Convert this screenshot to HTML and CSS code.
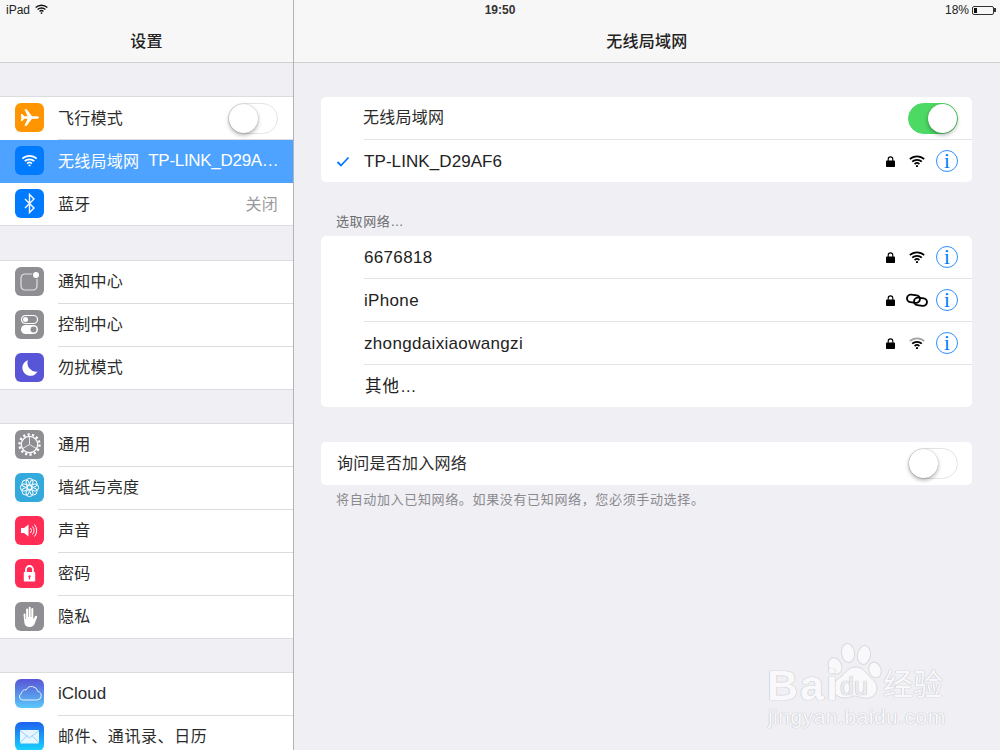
FILE: index.html
```html
<!DOCTYPE html>
<html lang="zh">
<head>
<meta charset="utf-8">
<title>无线局域网</title>
<link rel="stylesheet" href="styles.css">
</head>
<body>
<svg class="defs" width="0" height="0" aria-hidden="true">
  <defs>
    <symbol id="wifi" viewBox="0 0 16 12">
      <path d="M.8 4.200a10.400 10.400 0 0 1 14.400 0" class="wa"/>
      <path d="M3.200 6.700a7 7 0 0 1 9.600 0" class="wb"/>
      <path d="M5.600 9.100a3.500 3.500 0 0 1 4.800 0" class="wc"/>
      <circle cx="8" cy="11" r="1.100" class="wd"/>
    </symbol>
    <symbol id="lock" viewBox="0 0 9 11">
      <path d="M2.200 5V3.200a2.300 2.300 0 0 1 4.600 0V5" fill="none" stroke="#000" stroke-width="1.100"/>
      <rect x="0" y="4.600" width="9" height="6.400" rx=".8" fill="#000"/>
    </symbol>
  </defs>
</svg>

<div class="status">
  <div class="status-left">iPad
    <svg class="wifi-status" width="13" height="10"><use href="#wifi"/></svg>
  </div>
  <div class="status-time">19:50</div>
  <div class="status-right">18%
    <span class="battery"><span class="battery-fill"></span></span>
  </div>
</div>

<div class="app">
  <aside class="side">
    <header class="bar">设置</header>

    <section class="group first">
      <div class="row">
        <span class="ico orange"><svg viewBox="0 0 29 29"><path d="M6 14.500c0-.8.7-1.300 1.600-1.300h5l-3.200-7h2.300l5.300 7h4.300c1.100 0 2.700.5 2.700 1.300s-1.600 1.300-2.700 1.300H17l-5.300 7H9.400l3.200-7h-5c-.9 0-1.600-.5-1.600-1.300zM6 11h1.300l1.900 2.200H6zM6 18h1.300l1.900-2.200H6z" fill="#fff"/></svg></span>
        <div class="body"><span class="label">飞行模式</span><span class="switch"><span class="knob"></span></span></div>
      </div>
      <div class="row selected">
        <span class="ico blue"><svg viewBox="0 0 29 29"><use href="#wifi" x="6.500" y="8.500" width="16" height="12"/></svg></span>
        <div class="body"><span class="label">无线局域网</span><span class="net-value">TP-LINK_D29A…</span></div>
      </div>
      <div class="row">
        <span class="ico blue"><svg viewBox="0 0 29 29"><path d="M10 10l9 9-4.500 4.500v-18L19 10l-9 9" fill="none" stroke="#fff" stroke-width="1.400"/></svg></span>
        <div class="body"><span class="label">蓝牙</span><span class="value">关闭</span></div>
      </div>
    </section>

    <section class="group">
      <div class="row">
        <span class="ico gray"><svg viewBox="0 0 29 29"><rect x="6" y="7" width="16" height="16" rx="4" fill="none" stroke="#fff" stroke-opacity=".75" stroke-width="1.200"/><circle cx="21" cy="8" r="4" fill="#8e8e93"/><circle cx="21" cy="8" r="3" fill="#fff"/></svg></span>
        <div class="body"><span class="label">通知中心</span></div>
      </div>
      <div class="row">
        <span class="ico gray"><svg viewBox="0 0 29 29"><rect x="6.500" y="5.500" width="16" height="8" rx="4" fill="none" stroke="#fff" stroke-width="1.200"/><circle cx="10.500" cy="9.500" r="2.500" fill="#fff"/><rect x="6" y="15" width="17" height="9" rx="4.500" fill="#fff"/><circle cx="18.500" cy="19.500" r="3" fill="#8e8e93"/></svg></span>
        <div class="body"><span class="label">控制中心</span></div>
      </div>
      <div class="row">
        <span class="ico purple"><svg viewBox="0 0 29 29"><path d="M13 7.200a8 8 0 1 0 9.500 11.300A8.500 8.500 0 0 1 13 7.200z" fill="#fff"/></svg></span>
        <div class="body"><span class="label">勿扰模式</span></div>
      </div>
    </section>

    <section class="group">
      <div class="row">
        <span class="ico gray"><svg viewBox="0 0 29 29"><circle cx="14.500" cy="14.500" r="10" fill="none" stroke="#fff" stroke-width="2.400" stroke-dasharray="2.240 2.240"/><circle cx="14.500" cy="14.500" r="8.200" fill="none" stroke="#fff" stroke-width="1.200"/><path d="M14.500 14.500V7M14.500 14.500l6.500 3.800M14.500 14.500L8 18.300" stroke="#fff" stroke-width=".8"/></svg></span>
        <div class="body"><span class="label">通用</span></div>
      </div>
      <div class="row">
        <span class="ico sky"><svg viewBox="0 0 29 29"><g fill="none" stroke="#fff" stroke-width="1"><circle cx="14.500" cy="14.500" r="2.400"/><circle cx="14.500" cy="9" r="3.600"/><circle cx="14.500" cy="20" r="3.600"/><circle cx="9" cy="14.500" r="3.600"/><circle cx="20" cy="14.500" r="3.600"/><circle cx="10.600" cy="10.600" r="3.600"/><circle cx="18.400" cy="10.600" r="3.600"/><circle cx="10.600" cy="18.400" r="3.600"/><circle cx="18.400" cy="18.400" r="3.600"/></g></svg></span>
        <div class="body"><span class="label">墙纸与亮度</span></div>
      </div>
      <div class="row">
        <span class="ico pink"><svg viewBox="0 0 29 29"><path d="M6 12h3l4.500-3.500v12L9 17H6z" fill="#fff"/><path d="M15.500 12a4 4 0 0 1 0 5M17.500 10.500a6.500 6.500 0 0 1 0 8M19.500 8.500a9.500 9.500 0 0 1 0 12" fill="none" stroke="#fff" stroke-width="1"/></svg></span>
        <div class="body"><span class="label">声音</span></div>
      </div>
      <div class="row">
        <span class="ico pink"><svg viewBox="0 0 29 29"><path d="M11 13.500V10.500a3.500 3.500 0 0 1 7 0v3" fill="none" stroke="#fff" stroke-width="1.800"/><path fill-rule="evenodd" d="M9.500 13h10a.7.7 0 0 1 .7.700v8a.7.7 0 0 1-.7.700h-10a.7.7 0 0 1-.7-.700v-8a.7.7 0 0 1 .7-.700zm5 3.200a1.300 1.300 0 0 0-.6 2.400V20.500h1.200v-1.900a1.300 1.300 0 0 0-.6-2.400z" fill="#fff"/></svg></span>
        <div class="body"><span class="label">密码</span></div>
      </div>
      <div class="row">
        <span class="ico gray"><svg viewBox="0 0 29 29"><path d="M8.500 12.500c0-1.500 2-1.500 2 0V17h.6V7.500c0-1.500 2-1.500 2 0V15h.6V5.800c0-1.500 2-1.500 2 0V15h.6V7c0-1.500 2-1.500 2 0v10.500l1.600-3c.9-1.500 2.800-.8 2.200.8l-2.600 6.700c-.9 2-2.500 3-4.700 3-3.500 0-5.300-1.800-5.500-5z" fill="#fff"/></svg></span>
        <div class="body"><span class="label">隐私</span></div>
      </div>
    </section>

    <section class="group">
      <div class="row">
        <span class="ico cloud"><svg viewBox="0 0 29 29"><path d="M7.500 21h14.500a4.300 4.300 0 0 0 .8-8.500 6.200 6.200 0 0 0-11.600-1.600 3.600 3.600 0 0 0-4.600 3.400A3.500 3.500 0 0 0 7.500 21z" fill="none" stroke="#fff" stroke-opacity=".85" stroke-width="1"/></svg></span>
        <div class="body"><span class="latin">iCloud</span></div>
      </div>
      <div class="row">
        <span class="ico mail"><svg viewBox="0 0 29 29"><rect x="5" y="8" width="19" height="13.500" rx="1" fill="#fff" fill-opacity=".9"/><path d="M5 8.500l9.500 7.500 9.500-7.500M5 21l7-7.500M24 21l-7-7.500" fill="none" stroke="#7cc8f8" stroke-width=".8"/></svg></span>
        <div class="body"><span class="label wide">邮件、通讯录、日历</span></div>
      </div>
    </section>
  </aside>

  <main class="main">
    <header class="bar">无线局域网</header>
    <div class="content">
      <section class="card">
        <div class="net">
          <span class="tick"></span>
          <div class="net-body shift"><span class="label">无线局域网</span><span class="switch on"><span class="knob"></span></span></div>
        </div>
        <div class="net">
          <span class="tick"><svg width="14" height="11" viewBox="0 0 14 11"><path d="M1.500 6l3.500 3.500L12.500 1.500" fill="none" stroke="#007aff" stroke-width="1.800"/></svg></span>
          <div class="net-body"><span class="net-name tight">TP-LINK_D29AF6</span>
            <svg class="lock" width="9" height="11"><use href="#lock"/></svg>
            <svg class="wf" width="16" height="12"><use href="#wifi"/></svg>
            <span class="info">i</span></div>
        </div>
      </section>

      <p class="caption">选取网络…</p>
      <section class="card">
        <div class="net">
          <span class="tick"></span>
          <div class="net-body"><span class="net-name">6676818</span>
            <svg class="lock" width="9" height="11"><use href="#lock"/></svg>
            <svg class="wf" width="16" height="12"><use href="#wifi"/></svg>
            <span class="info">i</span></div>
        </div>
        <div class="net">
          <span class="tick"></span>
          <div class="net-body"><span class="net-name">iPhone</span>
            <svg class="lock" width="9" height="11"><use href="#lock"/></svg>
            <svg class="wf link" width="22" height="14" viewBox="0 0 22 14"><rect x="1" y="2" width="13" height="7.500" rx="3.750" fill="none" stroke="#000" stroke-width="1.800" transform="rotate(8 7.500 5.700)"/><rect x="8" y="5" width="13" height="7.500" rx="3.750" fill="none" stroke="#000" stroke-width="1.800" transform="rotate(8 14.500 8.700)"/></svg>
            <span class="info">i</span></div>
        </div>
        <div class="net">
          <span class="tick"></span>
          <div class="net-body"><span class="net-name">zhongdaixiaowangzi</span>
            <svg class="lock" width="9" height="11"><use href="#lock"/></svg>
            <svg class="wf weak" width="16" height="12"><use href="#wifi"/></svg>
            <span class="info">i</span></div>
        </div>
        <div class="net">
          <span class="tick"></span>
          <div class="net-body"><span class="net-name cjk">其他…</span></div>
        </div>
      </section>

      <section class="card ask">
        <div class="net">
          <div class="net-body"><span class="label">询问是否加入网络</span><span class="switch"><span class="knob"></span></span></div>
        </div>
      </section>
      <p class="note">将自动加入已知网络。如果没有已知网络，您必须手动选择。</p>
    </div>
  </main>
</div>

<div class="watermark">
  <svg class="paw" width="60" height="62" viewBox="0 0 60 62">
    <g fill="#f9f9fc" stroke="#d9d9de" stroke-width="1">
      <ellipse cx="8" cy="24" rx="6.500" ry="8.500" transform="rotate(-25 8 24)"/>
      <ellipse cx="21" cy="11" rx="6.500" ry="9.500" transform="rotate(-8 21 11)"/>
      <ellipse cx="37" cy="13" rx="6.500" ry="9.500" transform="rotate(10 37 13)"/>
      <ellipse cx="48" cy="28" rx="6" ry="8" transform="rotate(-20 48 28)"/>
      <path d="M29 25c6 0 9 5 13 9 4 3 8 7 8 12 0 8-7 11-13 10-4 0-6-2-9-2s-5 2-10 2C11 56 6 52 6 46c0-6 5-9 9-12 4-4 7-9 14-9z"/>
    </g>
  </svg>
  <span class="wm-bai">Bai</span>
  <span class="wm-du">du</span>
  <span class="wm-cn">经验</span>
  <span class="wm-url">jingyan.baidu.com</span>
</div>
</body>
</html>
```
FILE: styles.css
```css
* { box-sizing: border-box; }
html, body { margin: 0; height: 750px; overflow: hidden; }
body {
  background: #efeff4;
  color: #222;
  font-family: "Liberation Sans", "Noto Sans CJK SC", sans-serif;
  font-size: 16px;
  position: relative;
}
.defs { position: absolute; }

.wa, .wb, .wc { fill: none; stroke: currentColor; stroke-width: 1.700; }
.wa { stroke: var(--outer-arc, currentColor); }
.wd { fill: currentColor; }

.status {
  position: absolute;
  top: 0; left: 0; right: 0;
  height: 20px;
  display: flex;
  align-items: center;
  justify-content: space-between;
  padding: 0 6px;
  font-size: 12px;
  color: #222;
}
.status-left { display: flex; align-items: center; gap: 5px; width: 200px; }
.wifi-status { color: #111; margin-top: -2px; }
.status-time { font-weight: 700; font-size: 12px; color: #333; }
.status-right { display: flex; align-items: center; justify-content: flex-end; gap: 3px; width: 200px; }
.battery {
  width: 22px; height: 9px;
  border: 1px solid #333;
  border-radius: 2px;
  padding: 1px;
  position: relative;
  display: block;
}
.battery::after {
  content: "";
  position: absolute;
  right: -3px; top: 1.500px;
  width: 2px; height: 4px;
  background: #333;
}
.battery-fill { display: block; width: 3px; height: 100%; background: #111; }

.app { display: flex; height: 750px; }
.side {
  width: 294px;
  flex: none;
  border-right: 1px solid #b4b4b8;
  overflow: hidden;
}
.main { flex: 1; min-width: 0; }

.bar {
  height: 63px;
  padding-top: 18px;
  background: #f7f7f7;
  border-bottom: 1px solid #cfcfd2;
  display: flex;
  align-items: center;
  justify-content: center;
  font-size: 16px;
  font-weight: 500;
  letter-spacing: .25px;
  color: #222;
}

.group {
  background: #fff;
  border-top: 1px solid #dcdce0;
  margin-top: 33px;
}
.group.first { margin-bottom: 34px; }
.row { display: flex; height: 43px; padding-left: 15px; align-items: stretch; }
.ico {
  width: 29px; height: 29px;
  border-radius: 6px;
  flex: none;
  margin-top: 6px;
  margin-right: 14px;
  overflow: hidden;
  display: block;
}
.ico svg { display: block; width: 29px; height: 29px; }
.orange { background: #ff9500; }
.blue { background: #007aff; color: #fff; }
.gray { background: #8e8e93; }
.purple { background: #5856d6; }
.sky { background: #34aadc; }
.pink { background: #ff2d55; }
.cloud { background: linear-gradient(#5856d6, #5ac8fa); }
.mail { background: linear-gradient(#1d62f0, #19d5fd); }

.body {
  flex: 1;
  min-width: 0;
  display: flex;
  align-items: center;
  justify-content: space-between;
  padding-right: 15px;
  border-bottom: 1px solid #dcdce0;
}
.row:last-child { margin-left: -15px; padding-left: 30px; }
.row:last-child .body { margin-left: -58px; padding-left: 58px; }
.label { letter-spacing: .25px; color: #2b2b2b; margin-bottom: 3px; white-space: nowrap; }
.group:not(.first) .label { margin-bottom: 5px; }
.label.wide { letter-spacing: .6px; }
.latin { font-size: 17px; color: #2b2b2b; }
.value { color: #9a9a9e; letter-spacing: .2px; margin-bottom: 3px; }

.selected { background: #4da3ff; }
.selected .body { border-bottom-color: #4da3ff; justify-content: flex-start; gap: 9px; }
.selected .label, .selected .net-value { color: #fff; }
.net-value { font-size: 17px; letter-spacing: -.3px; white-space: nowrap; }

.switch {
  width: 50px; height: 31px;
  border-radius: 16px;
  border: 1px solid #e4e4e6;
  background: #fff;
  position: relative;
  flex: none;
  display: block;
}
.knob {
  position: absolute;
  left: 0; top: 0;
  width: 29px; height: 29px;
  border-radius: 50%;
  background: #fff;
  box-shadow: 0 2px 4px rgba(0,0,0,.32), 0 0 1px rgba(0,0,0,.25);
}
.switch.on { background: #4cd964; border-color: #4cd964; }
.switch.on .knob { left: 19px; }

.content { padding: 34px 28px 0 27px; }
.card { background: #fff; border-radius: 5px; overflow: hidden; }
.net { display: flex; height: 43px; }
.card:not(.ask) .net:first-child { height: 42px; }
.tick {
  width: 43px;
  flex: none;
  display: flex;
  align-items: center;
  padding-left: 15px;
  padding-top: 1px;
}
.net-body {
  flex: 1;
  display: flex;
  align-items: center;
  padding-right: 14px;
  border-top: 1px solid #e4e4e6;
  min-width: 0;
}
.net:first-child .net-body { border-top: 0; }
.net-body .label { margin-right: auto; }
.shift .label { margin-left: -1px; margin-bottom: 5px; }
.net-name { font-size: 17px; letter-spacing: .33px; margin-right: auto; margin-top: 2px; color: #222; }
.net-name.tight { letter-spacing: .08px; }
.net-name.cjk { font-size: 16.500px; letter-spacing: 1px; margin-left: 1px; margin-top: 0; margin-bottom: 3px; }
.lock { flex: none; margin-right: 14px; }
.wf { flex: none; color: #000; margin-right: 11px; }
.wf.link { margin-left: -3px; margin-right: 8px; }
.weak { --outer-arc: #a5a5a5; }
.info {
  width: 22px; height: 22px;
  border: 1px solid #2e8fff;
  border-radius: 50%;
  color: #007aff;
  font-family: "Liberation Serif", serif;
  font-size: 21px;
  line-height: 20px;
  text-align: center;
  flex: none;
}
.caption {
  margin: 0;
  padding: 32px 0 6px 15px;
  height: 54px;
  font-size: 13px;
  letter-spacing: .6px;
  line-height: 16px;
  color: #6d6d72;
}
.ask { margin-top: 35px; }
.ask .net-body { padding-left: 16px; }
.note {
  margin: 6px 0 0;
  padding-left: 15px;
  font-size: 13px;
  line-height: 17px;
  letter-spacing: .65px;
  color: #8a8a8f;
}

.watermark {
  position: absolute;
  left: 768px; top: 640px;
  width: 232px; height: 110px;
  color: #f9f9fc;
}
.paw { position: absolute; left: 59px; top: 2px; }
.wm-bai, .wm-du, .wm-cn, .wm-url {
  position: absolute;
  line-height: 1;
  white-space: nowrap;
  text-shadow: 0 0 1px #bdbdc2, 0 0 1px #bdbdc2;
}
.wm-bai { left: -1px; top: 24px; font-size: 43px; font-weight: 700; letter-spacing: 2px; }
.wm-du { left: 72px; top: 34px; font-size: 25px; color: #ececf0; }
.wm-cn { left: 115px; top: 30px; font-size: 30px; }
.wm-url { left: 0; top: 66px; font-size: 21px; letter-spacing: .5px; }
```
